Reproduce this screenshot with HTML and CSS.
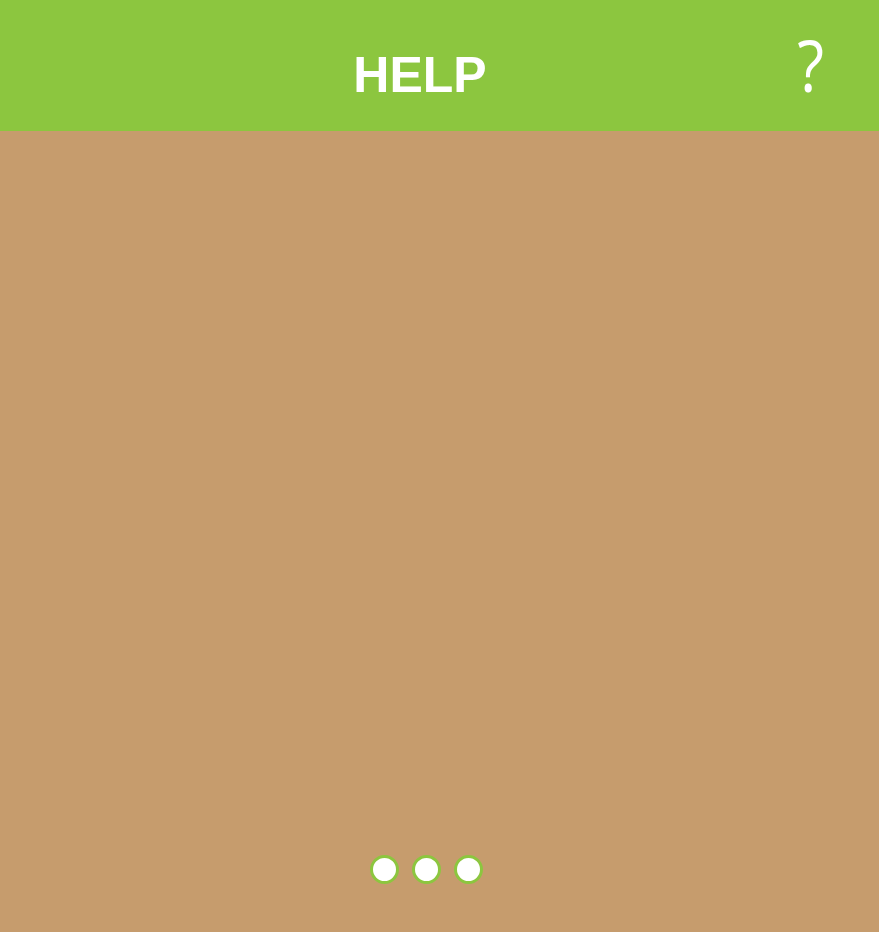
FILE: index.html
```html
<!DOCTYPE html>
<html lang="en">
<head>
<meta charset="utf-8">
<title>Help</title>
<link rel="stylesheet" href="styles.css">
</head>
<body>
<div class="app">
  <header class="header">
    <h1 class="title">HELP</h1>
    <span class="help-icon">?</span>
  </header>
  <main class="content">
    <div class="pager">
      <span class="dot"></span>
      <span class="dot"></span>
      <span class="dot"></span>
    </div>
  </main>
</div>
</body>
</html>
```
FILE: styles.css
```css
html, body {
  margin: 0;
  padding: 0;
  height: 100%;
}
body {
  font-family: "Liberation Sans", Arial, sans-serif;
  background: #c69c6d;
}
.app {
  display: flex;
  flex-direction: column;
  height: 932px;
}
.header {
  flex: 0 0 131px;
  background: #8cc63f;
  display: flex;
  align-items: flex-start;
  padding: 0 53px 0 45px;
  box-sizing: border-box;
}
.title {
  flex: 1;
  margin: 0;
  padding-top: 50px;
  text-align: center;
  color: #fff;
  font-family: "Liberation Sans", Arial, sans-serif;
  font-weight: bold;
  font-size: 50px;
  line-height: 50px;
}
.help-icon {
  color: #fff;
  font-family: "Open Sans", sans-serif;
  font-weight: 400;
  font-size: 72px;
  line-height: 72px;
  padding-top: 28px;
  transform: scaleX(0.86);
}
.content {
  flex: 1;
  display: flex;
  flex-direction: column;
  justify-content: flex-end;
  padding-bottom: 48px;
}
.pager {
  display: flex;
  justify-content: center;
  gap: 13px;
  padding-right: 27px;
}
.dot {
  width: 29px;
  height: 29px;
  box-sizing: border-box;
  border-radius: 50%;
  background: #fff;
  border: 3px solid #8cc63f;
}
```
